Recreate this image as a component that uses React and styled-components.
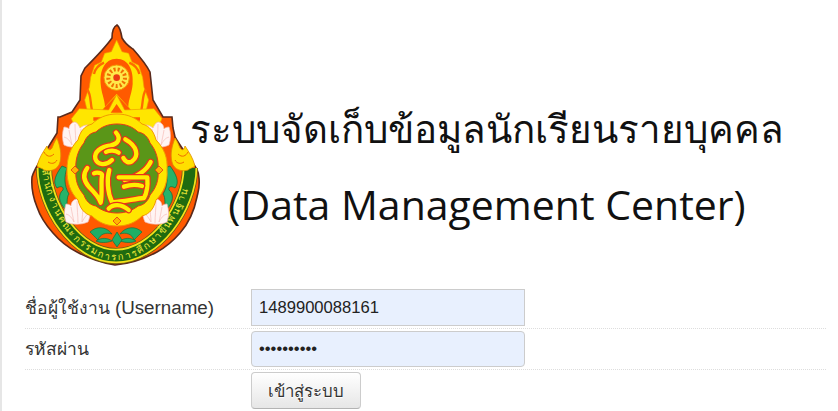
import React from 'react';
import styled, { createGlobalStyle } from 'styled-components';

const Global = createGlobalStyle`
  html, body {
    margin: 0;
    height: 411px;
    overflow: hidden;
    background: #fff;
  }
`;

const Page = styled.div`
  height: 411px;
  box-sizing: border-box;
  border-left: 2px solid #e6e6e6;
  padding: 0 12px 0 23px;
  font-family: 'Liberation Sans', Arial, sans-serif;
  color: #333;
  overflow: hidden;
`;

const Banner = styled.header`
  display: flex;
  align-items: flex-start;
  height: 289px;
`;

const Crest = styled.svg`
  flex: none;
  width: 176px;
  height: 246px;
  margin: 23px 0 0 3px;
`;

const Titles = styled.div`
  margin: 99px 0 0 -17px;
  width: 600px;
  text-align: center;
  font-family: 'Open Sans', 'Noto Sans', sans-serif;
  color: #111;
`;

const Title = styled.h1`
  margin: 0;
  font-weight: 400;
  font-size: ${p => p.$size}px;
  line-height: ${p => p.$line}px;
  white-space: nowrap;
`;

const Row = styled.div`
  display: grid;
  grid-template-columns: 226px 274px;
  align-items: center;
  padding-bottom: ${p => (p.$last ? 0 : 2)}px;
  margin-bottom: ${p => (p.$last ? 0 : 2)}px;
  border-bottom: ${p => (p.$last ? 'none' : '1px dotted #ddd')};
`;

const Label = styled.label`
  font-size: 17.5px;
`;

const Latin = styled.span`
  font-size: 18.8px;
`;

const Field = styled.input`
  box-sizing: border-box;
  width: 274px;
  height: ${p => p.$h}px;
  padding: 0 7px;
  border: 1px solid #ccc;
  border-radius: ${p => p.$radius}px;
  background: #e8f0fe;
  color: #222;
  font-family: inherit;
  font-size: 16.6px;
  outline: none;
`;

const Submit = styled.button`
  box-sizing: border-box;
  width: 110px;
  height: 37px;
  border: 1px solid #ccc;
  border-bottom-color: #b3b3b3;
  border-radius: 4px;
  background: linear-gradient(#fff, #e6e6e6);
  color: #333;
  font-family: inherit;
  font-size: 16.8px;
  text-shadow: 0 1px 1px #fff;
`;

// white lotus, drawn round its own centre
const Lotus = ({ x, y, flip }) => (
  <g transform={`translate(${x} ${y}) scale(${flip ? -1 : 1} 1)`}>
    <path d="M-12 10 C-14 4 -14 -2 -12 -8 C-9 -8 -8 -7 -7 -6 C-7 -10 -4 -13 -1 -13 C2 -12 3 -9 4 -7 C6 -9 9 -10 12 -10 C13 -4 13 3 10 10 C3 13 -6 13 -12 10Z" fill="#fff4f3" stroke="#f3b6b0" strokeWidth="0.7" />
    <path d="M-7 -5 C-6 1 -5 5 -4 10 M-1 -11 C-1 -3 0 4 0 11 M5 -6 C5 0 4 5 4 10 M-12 2 C-8 3 -6 6 -4 10 M12 0 C9 2 6 6 4 10" stroke="#f6bdb7" strokeWidth="0.7" fill="none" />
  </g>
);

// side flame and green scroll, mirrored for the right hand side
const SideOrnament = ({ flip }) => (
  <g transform={flip ? 'translate(232 0) scale(-1 1)' : undefined}>
    <path d="M37 166 C39 158 43 152 47 146 C48 150 50 151 52 148 C53 146 54 142 57 138 C60 146 62 154 60 162 C58 170 50 172 44 170 C42 168 39 168 37 166Z" fill="#ffdf00" stroke="#e08a00" strokeWidth="0.8" />
    <path d="M44 152 C46 156 50 158 54 154 M48 162 C51 164 55 164 57 160" stroke="#f06a00" strokeWidth="1" fill="none" />
    <path d="M62 166 C56 174 52 182 57 188 C60 186 64 186 63 190 C58 194 58 202 66 210 C68 204 66 198 69 194 C64 186 64 176 67 168Z" fill="#27b36a" stroke="#0b6b3a" strokeWidth="0.7" />
    <path d="M90 232 C96 226 106 226 112 234 C106 232 100 234 98 240 C94 236 92 234 90 232Z" fill="#1fae66" stroke="#0b6b3a" strokeWidth="0.6" />
    <path d="M96 241 C102 237 108 238 112 241 C106 243 100 243 96 241Z" fill="#1fae66" stroke="#0b6b3a" strokeWidth="0.6" />
  </g>
);

const glyphStrokes = [
  'M198 8 C214 26 204 42 182 46 C152 50 132 66 136 86 C142 106 168 108 186 90',
  'M226 28 C262 48 268 78 246 94 C236 100 226 96 220 84',
  'M302 96 C288 124 262 140 224 150',
  'M168 66 C178 60 196 60 206 68',
  'M112 114 C98 132 100 152 118 172 C132 186 146 200 152 218 C158 190 152 160 156 138 C158 128 140 126 132 130',
  'M178 120 C170 146 172 186 186 216 C206 218 256 206 282 204 C292 186 294 168 292 142 L206 142',
  'M222 170 C240 164 262 164 276 168',
  'M176 236 C188 222 214 220 236 240',
];

const ringPath = 'M44 168 C44 206 76 256 116 256 C156 256 190 206 190 168';

function Emblem() {
  const outline =
    'M117 25 C120 27 121 32 122 38 C126 45 130 47 133 49 C140 57 146 64 150 72 L153 100 L163 117 L172 117 L173 128 L175 137 C180 146 186 153 190 160 C196 166 199 172 199 178 C200 188 198 192 197 197 C194 212 188 224 180 233 C174 240 166 247 157 252 C142 260 128 264 115 265 C102 263 90 259 77 252 C67 247 59 240 53 233 C45 224 40 216 37 207 C33 197 31 188 32 177 C34 170 38 164 42 158 C47 149 52 141 57 133 L58 117 L60 117 L72 112 L80 100 L81 76 L85 68 C93 60 105 48 112 38 C112 32 113 27 117 25Z';
  return (
    <Crest viewBox="28 23 176 246" role="img" aria-label="สำนักงานคณะกรรมการการศึกษาขั้นพื้นฐาน">
      <defs>
        <path id="ringText" d="M41 156 C41 206 76 260 116 260 C156 260 193 206 193 156" />
      </defs>
      <path d={outline} fill="#ff5a00" stroke="#5a2a1c" strokeWidth="1.600" />

      {/* flame frame and wheel, in 3x crop units */}
      <g transform="scale(0.3333)">
        <path d="M350 120 L366 155 L386 160 L396 186 L416 196 L428 232 L432 262 L446 300 L436 342 L402 342 L386 322 L350 285 L314 322 L298 342 L264 342 L254 300 L268 262 L272 232 L284 196 L304 186 L314 160 L334 155Z" fill="#ffe600" stroke="#f29a00" strokeWidth="2" />
        <path d="M350 176 C386 176 402 212 398 252 C396 280 386 296 385 320 L350 282 L315 320 C314 296 304 280 302 252 C298 212 314 176 350 176Z" fill="#ff5a00" />
        <path d="M262 268 C274 286 270 306 276 330 M438 268 C426 286 430 306 424 330 M282 222 C286 204 298 194 312 188 M418 222 C414 204 402 194 388 188" fill="none" stroke="#ff6a00" strokeWidth="7" />
        <circle cx="350" cy="233" r="38" fill="#ffe84a" stroke="#f29a00" strokeWidth="3" />
        <circle cx="350" cy="233" r="25" fill="none" stroke="#f07000" strokeWidth="12" strokeDasharray="6 6" />
        <circle cx="350" cy="233" r="10" fill="#ea3a12" />
        <path d="M350 284 L374 330 L462 326 L486 356 L470 392 L230 392 L214 356 L238 326 L326 330Z" fill="#ffe600" stroke="#f29a00" strokeWidth="2" />
        <path d="M350 312 L368 338 L332 338Z" fill="#ff5a00" />
        <path d="M280 352 H420 V362 H280Z" fill="#ff5a00" />
      </g>

      <Lotus x={76} y={135} />
      <Lotus x={157} y={135} flip />

      {/* green ring with the office name */}
      <g fill="none">
        <path d={ringPath} stroke="#6b5a10" strokeWidth="16" />
        <path d={ringPath} stroke="#f4e21a" strokeWidth="14.500" />
        <path d={ringPath} stroke="#1f6b10" strokeWidth="11" />
      </g>
      <text fontFamily="'Noto Sans', 'Liberation Sans', sans-serif" fontSize="9.500" fill="#f7ee3a">
        <textPath href="#ringText" startOffset="5%" textLength="232" lengthAdjust="spacing">สำนักงานคณะกรรมการการศึกษาขั้นพื้นฐาน</textPath>
      </text>

      <SideOrnament />
      <SideOrnament flip />
      <path d="M117 232 L122 240 L117 247 L112 240Z" fill="#1fae66" stroke="#0b6b3a" strokeWidth="0.6" />
      <Lotus x={78} y={212} />
      <Lotus x={155} y={212} flip />

      {/* centre medallion with the office monogram */}
      <path d="M117 114 C128 114 136 118 142 124 C150 126 154 132 156 140 C164 148 168 158 167 170 C168 182 164 192 156 200 C154 208 150 214 142 216 C136 222 128 226 117 226 C106 226 98 222 92 216 C84 214 80 208 78 200 C70 192 67 182 67 170 C67 158 70 148 78 140 C80 132 84 126 92 124 C98 118 106 114 117 114Z" fill="#ffe600" stroke="#f29a00" strokeWidth="1" />
      <path d="M117 124 C126 124 133 127 138 132 C144 133 148 137 150 143 C156 150 159 160 158 170 C159 180 156 188 150 195 C148 201 144 205 138 206 C133 210 126 213 117 213 C108 213 101 210 96 206 C90 205 86 201 84 195 C78 188 75 180 76 170 C75 160 78 150 84 143 C86 137 90 133 96 132 C101 127 108 124 117 124Z" fill="#5a9618" stroke="#e8321b" strokeWidth="1" />
      <path d="M71 170 L75 166 L79 170 L75 174Z M155 170 L159 166 L163 170 L159 174Z M117 217 L121 221 L117 225 L113 221Z" fill="#ffb400" stroke="#e8321b" strokeWidth="0.8" />
      <g transform="translate(50 130) scale(0.3333)" fill="none" strokeLinecap="round" strokeLinejoin="round">
        {glyphStrokes.map((d, i) => (
          <g key={i}>
            <path d={d} stroke="#e8321b" strokeWidth="20" />
            <path d={d} stroke="#ffee00" strokeWidth="13" />
          </g>
        ))}
      </g>
    </Crest>
  );
}

export default function App() {
  return (
    <Page>
      <Global />
      <Banner>
        <Emblem />
        <Titles>
          <Title $size={38.5} $line={58}>ระบบจัดเก็บข้อมูลนักเรียนรายบุคคล</Title>
          <Title $size={41} $line={94}>(Data Management Center)</Title>
        </Titles>
      </Banner>
      <form>
        <Row>
          <Label>ชื่อผู้ใช้งาน <Latin>(Username)</Latin></Label>
          <Field $h={37} $radius={0} defaultValue="1489900088161" />
        </Row>
        <Row>
          <Label>รหัสผ่าน</Label>
          <Field $h={36} $radius={4} type="password" defaultValue="1234567890" />
        </Row>
        <Row $last>
          <span />
          <Submit type="button">เข้าสู่ระบบ</Submit>
        </Row>
      </form>
    </Page>
  );
}
